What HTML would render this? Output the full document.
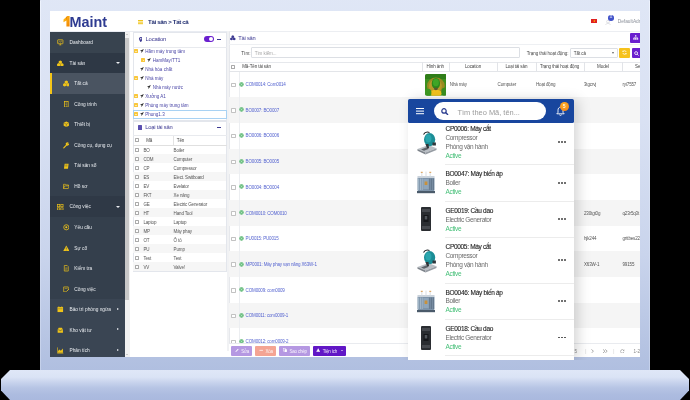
<!DOCTYPE html>
<html><head><meta charset="utf-8"><style>
*{margin:0;padding:0;box-sizing:border-box}
html,body{width:690px;height:400px;overflow:hidden;background:#000}
body{position:relative;font-family:"Liberation Sans",sans-serif;color:#333}
div,span,svg{position:absolute}
.nw{white-space:nowrap}
</style></head><body>
<div style="left:0;top:0;width:690px;height:400px;overflow:hidden;will-change:transform">
<div style="left:40px;top:-12px;width:610px;height:382px;border-radius:9px 9px 0 0;background:linear-gradient(#e0e7f6 0%,#d9e1f3 35%,#c9d4ec 70%,#b0bfe0 100%)"></div>
<div style="left:40px;top:1px;width:1.2px;height:369px;background:linear-gradient(#eef3fd,#c4d0ea)"></div>
<div style="left:648.8px;top:1px;width:1.2px;height:369px;background:linear-gradient(#eef3fd,#c4d0ea)"></div>
<div style="left:0;top:370px;width:690px;height:30px;background:linear-gradient(#dfe7f7 0%,#dae3f5 24%,#c9d4ed 40%,#b6c4e4 60%,#adbce0 80%,#aab9de 100%);clip-path:polygon(10px 0,680px 0,689px 9px,689px 20.5px,680px 30px,10px 30px,1px 20.5px,1px 9px)"></div>
<div style="left:50px;top:11px;width:590px;height:346.4px;background:#fff;overflow:hidden"><div style="left:0;top:0;width:590px;height:21px;background:#fff;border-bottom:1px solid #e9ecf2"></div><svg style="left:13px;top:5px" width="7" height="11" viewBox="0 0 7 11"><defs><linearGradient id="g1" x1="0" y1="0" x2="1" y2="1"><stop offset="0" stop-color="#ffc21a"/><stop offset="1" stop-color="#f08000"/></linearGradient></defs><polygon points="0.5,3.6 4.4,0 6.6,0 6.6,10.4 3.4,10.4 3.4,4.6 0.5,6.2" fill="url(#g1)"/><polygon points="3.4,4.6 4.4,0 3.4,1" fill="#e07000"/></svg><div class="nw" style="left:19.5px;top:3.2px;font-size:14.4px;font-weight:bold;color:#2e3b91;letter-spacing:0px">Maint</div><div style="left:88px;top:9px;width:4.5px;height:0.9px;background:#f0c419;box-shadow:0 1.6px 0 #f0c419,0 3.2px 0 #f0c419"></div><div class="nw" style="left:98px;top:7.2px;font-size:6.1px;font-weight:bold;color:#1d2a6e;letter-spacing:-0.32px">Tài sản &gt; Tất cả</div><div style="left:541px;top:8px;width:6px;height:4px;background:#e02020"></div><div style="left:543.2px;top:8.6px;font-size:3px;color:#ffd800;line-height:3px">★</div><svg style="left:555.3px;top:8.6px" width="6" height="5.5" viewBox="0 0 6 5.5"><circle cx="3" cy="1.7" r="1.4" fill="none" stroke="#d4d6da" stroke-width="0.7"/><path d="M0.6 5.3C0.9 3.8 1.9 3.3 3 3.3S5.1 3.8 5.4 5.3" fill="none" stroke="#d4d6da" stroke-width="0.7"/></svg><div style="left:558.2px;top:4.2px;width:5.6px;height:5.6px;border-radius:50%;background:#4152c9;color:#fff;font-size:3px;line-height:5.6px;text-align:center">11</div><div class="nw" style="left:567.7px;top:8.0px;font-size:4.8px;color:#8a8f99">DefaultAdmin</div><div style="left:0;top:21px;width:75px;height:324.7px;background:#343f4c"></div><div style="left:0;top:21.00px;width:75px;height:20.85px;background:#38434f"></div><div class="nw" style="left:19.5px;top:29.00px;font-size:4.8px;color:#e9ecf0">Dashboard</div><svg style="left:7.2px;top:28.20px" width="6.6" height="6.6" viewBox="0 0 10 10"><rect x="1" y="1.2" width="8" height="6" rx="0.6" fill="none" stroke="#f0c419" stroke-width="1.1"/><path d="M2.6 5.2L4.2 3.6L5.4 4.6L7.4 2.8" fill="none" stroke="#f0c419" stroke-width="0.9"/><path d="M3.5 9H6.5M5 7.2V9" stroke="#f0c419" stroke-width="1"/></svg><div style="left:0;top:41.55px;width:75px;height:20.85px;background:#2e3845"></div><div class="nw" style="left:19.5px;top:49.55px;font-size:4.8px;color:#e9ecf0">Tài sản</div><svg style="left:7.2px;top:48.75px" width="6.6" height="6.6" viewBox="0 0 10 10"><path d="M5 0.6L7.4 1.9V4.6L5 5.9L2.6 4.6V1.9Z" fill="#f0c419"/><path d="M2.5 4.6L4.9 5.9V8.6L2.5 9.9L0.1 8.6V5.9Z" fill="#f0c419"/><path d="M7.5 4.6L9.9 5.9V8.6L7.5 9.9L5.1 8.6V5.9Z" fill="#f0c419"/></svg><div style="left:66px;top:50.95px;width:0;height:0;border-left:2px solid transparent;border-right:2px solid transparent;border-top:2.4px solid #eceef2"></div><div style="left:0;top:62.10px;width:75px;height:20.85px;background:#4a5461"></div><div style="left:0;top:62.10px;width:1.6px;height:20.55px;background:#f5c518"></div><div class="nw" style="left:24.3px;top:70.10px;font-size:4.8px;color:#e9ecf0">Tất cả</div><svg style="left:12.6px;top:69.30px" width="6.6" height="6.6" viewBox="0 0 10 10"><path d="M5 0.6L7.4 1.9V4.6L5 5.9L2.6 4.6V1.9Z" fill="#f0c419"/><path d="M2.5 4.6L4.9 5.9V8.6L2.5 9.9L0.1 8.6V5.9Z" fill="#f0c419"/><path d="M7.5 4.6L9.9 5.9V8.6L7.5 9.9L5.1 8.6V5.9Z" fill="#f0c419"/></svg><div class="nw" style="left:24.3px;top:90.65px;font-size:4.8px;color:#e9ecf0">Công trình</div><svg style="left:12.6px;top:89.85px" width="6.6" height="6.6" viewBox="0 0 10 10"><rect x="2.2" y="0.8" width="5.6" height="8.4" fill="none" stroke="#f0c419" stroke-width="1.1"/><path d="M3.8 3H6.2M3.8 5H6.2M4.6 7.2H5.4V9" stroke="#f0c419" stroke-width="0.9"/></svg><div class="nw" style="left:24.3px;top:111.20px;font-size:4.8px;color:#e9ecf0">Thiết bị</div><svg style="left:12.6px;top:110.40px" width="6.6" height="6.6" viewBox="0 0 10 10"><path d="M5 0.8L9 2.8V7.2L5 9.2L1 7.2V2.8Z" fill="#f0c419"/><path d="M1 2.8L5 4.8L9 2.8M5 4.8V9.2" fill="none" stroke="#343f4c" stroke-width="0.6"/></svg><div class="nw" style="left:24.3px;top:131.75px;font-size:4.8px;color:#e9ecf0">Công cụ, dụng cụ</div><svg style="left:12.6px;top:130.95px" width="6.6" height="6.6" viewBox="0 0 10 10"><path d="M1.2 8.8L5.2 4.8" stroke="#f0c419" stroke-width="1.8" stroke-linecap="round"/><path d="M5 5A2.6 2.6 0 1 1 8.6 1.2L6.8 3L7.2 3.6L9 2A2.6 2.6 0 0 1 5 5Z" fill="#f0c419"/></svg><div class="nw" style="left:24.3px;top:152.30px;font-size:4.8px;color:#e9ecf0">Tài sản số</div><svg style="left:12.6px;top:151.50px" width="6.6" height="6.6" viewBox="0 0 10 10"><path d="M2.5 1H8.5L7.5 8.8H1.5Z" fill="#f0c419"/><path d="M3.6 3H6.8M3.4 4.6H6.6" stroke="#343f4c" stroke-width="0.6"/></svg><div class="nw" style="left:24.3px;top:172.85px;font-size:4.8px;color:#e9ecf0">Hồ sơ</div><svg style="left:12.6px;top:172.05px" width="6.6" height="6.6" viewBox="0 0 10 10"><path d="M0.8 2H3.8L4.6 3H8.4V4.4M0.8 2V8.4H8L9.4 4.4H2.4L0.8 8.4" fill="none" stroke="#f0c419" stroke-width="1"/></svg><div style="left:0;top:185.40px;width:75px;height:20.85px;background:#2f3946"></div><div class="nw" style="left:19.5px;top:193.40px;font-size:4.8px;color:#e9ecf0">Công việc</div><svg style="left:7.2px;top:192.60px" width="6.6" height="6.6" viewBox="0 0 10 10"><rect x="0.8" y="0.8" width="3.4" height="3.4" fill="none" stroke="#f0c419" stroke-width="1"/><rect x="5.8" y="0.8" width="3.4" height="3.4" fill="none" stroke="#f0c419" stroke-width="1"/><rect x="0.8" y="5.8" width="3.4" height="3.4" fill="none" stroke="#f0c419" stroke-width="1"/><rect x="5.8" y="5.8" width="3.4" height="3.4" fill="none" stroke="#f0c419" stroke-width="1"/></svg><div style="left:66px;top:194.80px;width:0;height:0;border-left:2px solid transparent;border-right:2px solid transparent;border-top:2.4px solid #eceef2"></div><div class="nw" style="left:24.3px;top:213.95px;font-size:4.8px;color:#e9ecf0">Yêu cầu</div><svg style="left:12.6px;top:213.15px" width="6.6" height="6.6" viewBox="0 0 10 10"><circle cx="5" cy="5" r="3.9" fill="none" stroke="#f0c419" stroke-width="1.2"/><circle cx="5" cy="5" r="1.6" fill="#f0c419"/></svg><div class="nw" style="left:24.3px;top:234.50px;font-size:4.8px;color:#e9ecf0">Sự cố</div><svg style="left:12.6px;top:233.70px" width="6.6" height="6.6" viewBox="0 0 10 10"><path d="M5 0.6L9.6 9H0.4Z" fill="#f0c419"/><path d="M5 3.6V6.2M5 7.1V8" stroke="#343f4c" stroke-width="0.9"/></svg><div class="nw" style="left:24.3px;top:255.05px;font-size:4.8px;color:#e9ecf0">Kiểm tra</div><svg style="left:12.6px;top:254.25px" width="6.6" height="6.6" viewBox="0 0 10 10"><path d="M2 0.8H6.4L8 2.4V9.2H2Z" fill="none" stroke="#f0c419" stroke-width="1"/><path d="M3.4 4.4H6.6M3.4 6H6.6M3.4 7.6H5.6" stroke="#f0c419" stroke-width="0.7"/></svg><div class="nw" style="left:24.3px;top:275.60px;font-size:4.8px;color:#e9ecf0">Công việc</div><svg style="left:12.6px;top:274.80px" width="6.6" height="6.6" viewBox="0 0 10 10"><path d="M1 1.4H8V5.4M1 1.4V8.8H4.6" fill="none" stroke="#f0c419" stroke-width="1"/><path d="M2.6 3.6H6.4" stroke="#f0c419" stroke-width="0.8"/><path d="M5 8.6L9 4.6" stroke="#f0c419" stroke-width="1.3"/></svg><div style="left:0;top:288.15px;width:75px;height:20.85px;background:#3a4553"></div><div class="nw" style="left:19.5px;top:296.15px;font-size:4.8px;color:#e9ecf0">Bảo trì phòng ngừa</div><svg style="left:7.2px;top:295.35px" width="6.6" height="6.6" viewBox="0 0 10 10"><rect x="0.8" y="1.6" width="8.4" height="7.6" fill="#f0c419"/><path d="M2.8 0.4V2.4M7.2 0.4V2.4" stroke="#f0c419" stroke-width="0.9"/><path d="M1.6 4.2H8.4" stroke="#343f4c" stroke-width="0.5"/></svg><div style="left:66.7px;top:296.65px;width:0;height:0;border-top:1.8px solid transparent;border-bottom:1.8px solid transparent;border-left:2.4px solid #eceef2"></div><div style="left:0;top:308.70px;width:75px;height:20.85px;background:#3a4553"></div><div class="nw" style="left:19.5px;top:316.70px;font-size:4.8px;color:#e9ecf0">Kho vật tư</div><svg style="left:7.2px;top:315.90px" width="6.6" height="6.6" viewBox="0 0 10 10"><path d="M1 4.2L2.6 1H7.4L9 4.2V8.8H1Z" fill="#f0c419"/><path d="M1.6 4.4H3.6L4.2 5.6H5.8L6.4 4.4H8.4" fill="none" stroke="#343f4c" stroke-width="0.7"/></svg><div style="left:66.7px;top:317.20px;width:0;height:0;border-top:1.8px solid transparent;border-bottom:1.8px solid transparent;border-left:2.4px solid #eceef2"></div><div style="left:0;top:329.25px;width:75px;height:16.45px;background:#3a4553"></div><div class="nw" style="left:19.5px;top:337.25px;font-size:4.8px;color:#e9ecf0">Phân tích</div><svg style="left:7.2px;top:336.45px" width="6.6" height="6.6" viewBox="0 0 10 10"><path d="M0.6 0.6V9.4H9.6" fill="none" stroke="#f0c419" stroke-width="1"/><path d="M1.6 8.6V6L3.8 3.8L5.8 5.6L9 2.4V8.6Z" fill="#f0c419"/></svg><div style="left:66.7px;top:337.75px;width:0;height:0;border-top:1.8px solid transparent;border-bottom:1.8px solid transparent;border-left:2.4px solid #eceef2"></div><div style="left:74.6px;top:21px;width:5.4px;height:326px;background:#f1f1f1"></div><div style="left:75.4px;top:26.6px;width:3.9px;height:262px;background:#c8c8c8"></div><div style="left:75.8px;top:22.6px;width:0;height:0;border-left:1.5px solid transparent;border-right:1.5px solid transparent;border-bottom:1.6px solid #a0a0a0"></div><div style="left:75.8px;top:343px;width:0;height:0;border-left:1.5px solid transparent;border-right:1.5px solid transparent;border-top:1.6px solid #a0a0a0"></div><div style="left:82.5px;top:20.5px;width:94px;height:89px;border:1px solid #e3e6ec;background:#fff"></div><div style="left:82.5px;top:35.5px;width:94px;height:1px;background:#e8eaee"></div><svg style="left:88.8px;top:25.6px" width="3.6" height="5.4" viewBox="0 0 4 6"><path d="M2 0C0.9 0 0 0.9 0 2C0 3.3 2 6 2 6S4 3.3 4 2C4 0.9 3.1 0 2 0ZM2 2.8A0.8 0.8 0 1 1 2 1.2A0.8 0.8 0 1 1 2 2.8Z" fill="#3d3a92"/></svg><div class="nw" style="left:95.5px;top:24.9px;font-size:5.9px;letter-spacing:-0.2px;color:#3d3a92">Location</div><div style="left:153.8px;top:25.4px;width:10px;height:6px;border-radius:3px;background:#6a1fcf"></div><div style="left:158.9px;top:26.3px;width:4.2px;height:4.2px;border-radius:50%;background:#fff"></div><div style="left:82.5px;top:98.8px;width:94px;height:9px;border:0.8px solid #a9d2f3"></div><div style="left:83.8px;top:38.3px;width:4.1px;height:4.1px;background:#f9c73c;border-radius:0.5px"></div><div style="left:85.2px;top:39.9px;width:1.4px;height:0.6px;background:#fde9a8"></div><svg style="left:89.7px;top:38.3px" width="3.9" height="3.9" viewBox="0 0 4 4"><path d="M4 0L0 1.7L1.6 2.3L1.3 4L2.5 2.7Z" fill="#2a2a2a"/></svg><div class="nw" style="left:95.2px;top:37.7px;font-size:4.55px;color:#4a46a6">Hầm máy trung tâm</div><div style="left:91.3px;top:47.3px;width:4.1px;height:4.1px;background:#f9c73c;border-radius:0.5px"></div><div style="left:92.7px;top:48.9px;width:1.4px;height:0.6px;background:#fde9a8"></div><svg style="left:97.2px;top:47.3px" width="3.9" height="3.9" viewBox="0 0 4 4"><path d="M4 0L0 1.7L1.6 2.3L1.3 4L2.5 2.7Z" fill="#2a2a2a"/></svg><div class="nw" style="left:102.7px;top:46.7px;font-size:4.55px;color:#4a46a6">HamMay/TT1</div><svg style="left:89.7px;top:56.3px" width="3.9" height="3.9" viewBox="0 0 4 4"><path d="M4 0L0 1.7L1.6 2.3L1.3 4L2.5 2.7Z" fill="#2a2a2a"/></svg><div class="nw" style="left:95.2px;top:55.7px;font-size:4.55px;color:#4a46a6">Nhà hóa chất</div><div style="left:83.8px;top:65.3px;width:4.1px;height:4.1px;background:#f9c73c;border-radius:0.5px"></div><div style="left:85.2px;top:66.9px;width:1.4px;height:0.6px;background:#fde9a8"></div><svg style="left:89.7px;top:65.3px" width="3.9" height="3.9" viewBox="0 0 4 4"><path d="M4 0L0 1.7L1.6 2.3L1.3 4L2.5 2.7Z" fill="#2a2a2a"/></svg><div class="nw" style="left:95.2px;top:64.7px;font-size:4.55px;color:#4a46a6">Nhà máy</div><svg style="left:97.2px;top:74.3px" width="3.9" height="3.9" viewBox="0 0 4 4"><path d="M4 0L0 1.7L1.6 2.3L1.3 4L2.5 2.7Z" fill="#2a2a2a"/></svg><div class="nw" style="left:102.7px;top:73.7px;font-size:4.55px;color:#4a46a6">Nhà máy nước</div><div style="left:83.8px;top:83.3px;width:4.1px;height:4.1px;background:#f9c73c;border-radius:0.5px"></div><div style="left:85.2px;top:84.9px;width:1.4px;height:0.6px;background:#fde9a8"></div><svg style="left:89.7px;top:83.3px" width="3.9" height="3.9" viewBox="0 0 4 4"><path d="M4 0L0 1.7L1.6 2.3L1.3 4L2.5 2.7Z" fill="#2a2a2a"/></svg><div class="nw" style="left:95.2px;top:82.7px;font-size:4.55px;color:#4a46a6">Xưởng A1</div><div style="left:83.8px;top:92.3px;width:4.1px;height:4.1px;background:#f9c73c;border-radius:0.5px"></div><div style="left:85.2px;top:93.9px;width:1.4px;height:0.6px;background:#fde9a8"></div><svg style="left:89.7px;top:92.3px" width="3.9" height="3.9" viewBox="0 0 4 4"><path d="M4 0L0 1.7L1.6 2.3L1.3 4L2.5 2.7Z" fill="#2a2a2a"/></svg><div class="nw" style="left:95.2px;top:91.7px;font-size:4.55px;color:#4a46a6">Phòng máy trung tâm</div><div style="left:83.8px;top:101.3px;width:4.1px;height:4.1px;background:#f9c73c;border-radius:0.5px"></div><div style="left:85.2px;top:102.9px;width:1.4px;height:0.6px;background:#fde9a8"></div><svg style="left:89.7px;top:101.3px" width="3.9" height="3.9" viewBox="0 0 4 4"><path d="M4 0L0 1.7L1.6 2.3L1.3 4L2.5 2.7Z" fill="#2a2a2a"/></svg><div class="nw" style="left:95.2px;top:100.7px;font-size:4.55px;color:#4a46a6">Phong1.3</div><div style="left:82.5px;top:109.5px;width:94px;height:151px;border:1px solid #e3e6ec;background:#fff"></div><div style="left:82.5px;top:123.8px;width:94px;height:1px;background:#e8eaee"></div><div style="left:88.2px;top:114.4px;width:4.2px;height:4.2px;background:#5b4fb0;border-radius:0.5px"></div><div class="nw" style="left:95.2px;top:113.0px;font-size:5.8px;letter-spacing:-0.2px;color:#3d3a92">Loại tài sản</div><div style="left:167.0px;top:27.9px;width:4.2px;height:1.2px;background:#3d3a92"></div><div style="left:167.0px;top:116.0px;width:4.2px;height:1.2px;background:#3d3a92"></div><div style="left:82.5px;top:133.6px;width:94px;height:0.8px;background:#e0e0e0"></div><div style="left:123.2px;top:124.5px;width:0.7px;height:9px;background:#e3e3e3"></div><div style="left:85.2px;top:127.1px;width:4px;height:4px;border:0.7px solid #aaa;border-radius:0.6px"></div><div class="nw" style="left:96.2px;top:127.0px;font-size:4.5px;letter-spacing:-0.15px;color:#444">Mã</div><div class="nw" style="left:126.8px;top:127.0px;font-size:4.5px;letter-spacing:-0.15px;color:#444">Tên</div><div style="left:85.2px;top:136.9px;width:4px;height:4px;border:0.7px solid #aaa;border-radius:0.6px;background:#fff"></div><div class="nw" style="left:93.4px;top:136.9px;font-size:4.5px;letter-spacing:-0.15px;color:#555">BO</div><div class="nw" style="left:123.6px;top:136.9px;font-size:4.5px;letter-spacing:-0.15px;color:#555">Boiler</div><div style="left:83.2px;top:143.4px;width:92.6px;height:9px;background:#f6f6f6"></div><div style="left:85.2px;top:145.9px;width:4px;height:4px;border:0.7px solid #aaa;border-radius:0.6px;background:#fff"></div><div class="nw" style="left:93.4px;top:145.9px;font-size:4.5px;letter-spacing:-0.15px;color:#555">COM</div><div class="nw" style="left:123.6px;top:145.9px;font-size:4.5px;letter-spacing:-0.15px;color:#555">Computer</div><div style="left:85.2px;top:154.9px;width:4px;height:4px;border:0.7px solid #aaa;border-radius:0.6px;background:#fff"></div><div class="nw" style="left:93.4px;top:154.9px;font-size:4.5px;letter-spacing:-0.15px;color:#555">CP</div><div class="nw" style="left:123.6px;top:154.9px;font-size:4.5px;letter-spacing:-0.15px;color:#555">Compressor</div><div style="left:83.2px;top:161.4px;width:92.6px;height:9px;background:#f6f6f6"></div><div style="left:85.2px;top:163.9px;width:4px;height:4px;border:0.7px solid #aaa;border-radius:0.6px;background:#fff"></div><div class="nw" style="left:93.4px;top:163.9px;font-size:4.5px;letter-spacing:-0.15px;color:#555">ES</div><div class="nw" style="left:123.6px;top:163.9px;font-size:4.5px;letter-spacing:-0.15px;color:#555">Elect. Switboard</div><div style="left:85.2px;top:172.9px;width:4px;height:4px;border:0.7px solid #aaa;border-radius:0.6px;background:#fff"></div><div class="nw" style="left:93.4px;top:172.9px;font-size:4.5px;letter-spacing:-0.15px;color:#555">EV</div><div class="nw" style="left:123.6px;top:172.9px;font-size:4.5px;letter-spacing:-0.15px;color:#555">Evelator</div><div style="left:83.2px;top:179.4px;width:92.6px;height:9px;background:#f6f6f6"></div><div style="left:85.2px;top:181.9px;width:4px;height:4px;border:0.7px solid #aaa;border-radius:0.6px;background:#fff"></div><div class="nw" style="left:93.4px;top:181.9px;font-size:4.5px;letter-spacing:-0.15px;color:#555">FKT</div><div class="nw" style="left:123.6px;top:181.9px;font-size:4.5px;letter-spacing:-0.15px;color:#555">Xe nâng</div><div style="left:85.2px;top:190.9px;width:4px;height:4px;border:0.7px solid #aaa;border-radius:0.6px;background:#fff"></div><div class="nw" style="left:93.4px;top:190.9px;font-size:4.5px;letter-spacing:-0.15px;color:#555">GE</div><div class="nw" style="left:123.6px;top:190.9px;font-size:4.5px;letter-spacing:-0.15px;color:#555">Electric Generator</div><div style="left:83.2px;top:197.4px;width:92.6px;height:9px;background:#f6f6f6"></div><div style="left:85.2px;top:199.9px;width:4px;height:4px;border:0.7px solid #aaa;border-radius:0.6px;background:#fff"></div><div class="nw" style="left:93.4px;top:199.9px;font-size:4.5px;letter-spacing:-0.15px;color:#555">HT</div><div class="nw" style="left:123.6px;top:199.9px;font-size:4.5px;letter-spacing:-0.15px;color:#555">Hand Tool</div><div style="left:85.2px;top:208.9px;width:4px;height:4px;border:0.7px solid #aaa;border-radius:0.6px;background:#fff"></div><div class="nw" style="left:93.4px;top:208.9px;font-size:4.5px;letter-spacing:-0.15px;color:#555">Laptop</div><div class="nw" style="left:123.6px;top:208.9px;font-size:4.5px;letter-spacing:-0.15px;color:#555">Laptop</div><div style="left:83.2px;top:215.4px;width:92.6px;height:9px;background:#f6f6f6"></div><div style="left:85.2px;top:217.9px;width:4px;height:4px;border:0.7px solid #aaa;border-radius:0.6px;background:#fff"></div><div class="nw" style="left:93.4px;top:217.9px;font-size:4.5px;letter-spacing:-0.15px;color:#555">MP</div><div class="nw" style="left:123.6px;top:217.9px;font-size:4.5px;letter-spacing:-0.15px;color:#555">Máy phay</div><div style="left:85.2px;top:226.9px;width:4px;height:4px;border:0.7px solid #aaa;border-radius:0.6px;background:#fff"></div><div class="nw" style="left:93.4px;top:226.9px;font-size:4.5px;letter-spacing:-0.15px;color:#555">OT</div><div class="nw" style="left:123.6px;top:226.9px;font-size:4.5px;letter-spacing:-0.15px;color:#555">Ô tô</div><div style="left:83.2px;top:233.4px;width:92.6px;height:9px;background:#f6f6f6"></div><div style="left:85.2px;top:235.9px;width:4px;height:4px;border:0.7px solid #aaa;border-radius:0.6px;background:#fff"></div><div class="nw" style="left:93.4px;top:235.9px;font-size:4.5px;letter-spacing:-0.15px;color:#555">PU</div><div class="nw" style="left:123.6px;top:235.9px;font-size:4.5px;letter-spacing:-0.15px;color:#555">Pump</div><div style="left:85.2px;top:244.9px;width:4px;height:4px;border:0.7px solid #aaa;border-radius:0.6px;background:#fff"></div><div class="nw" style="left:93.4px;top:244.9px;font-size:4.5px;letter-spacing:-0.15px;color:#555">Test</div><div class="nw" style="left:123.6px;top:244.9px;font-size:4.5px;letter-spacing:-0.15px;color:#555">Test</div><div style="left:83.2px;top:251.4px;width:92.6px;height:9px;background:#f6f6f6"></div><div style="left:85.2px;top:253.9px;width:4px;height:4px;border:0.7px solid #aaa;border-radius:0.6px;background:#fff"></div><div class="nw" style="left:93.4px;top:253.9px;font-size:4.5px;letter-spacing:-0.15px;color:#555">VV</div><div class="nw" style="left:123.6px;top:253.9px;font-size:4.5px;letter-spacing:-0.15px;color:#555">Valve!</div><div style="left:176.6px;top:20.0px;width:2px;height:320px;background:#f1f2f4"></div><div style="left:178.5px;top:20.0px;width:420px;height:320px;border-left:1px solid #e6e8ec;border-top:1px solid #eceef2"></div><svg style="left:180.3px;top:24.4px" width="5.6" height="5.4" viewBox="0 0 10 10"><path d="M5 0.6L7.4 1.9V4.6L5 5.9L2.6 4.6V1.9Z" fill="#3d3a92"/><path d="M2.5 4.6L4.9 5.9V8.6L2.5 9.9L0.1 8.6V5.9Z" fill="#3d3a92"/><path d="M7.5 4.6L9.9 5.9V8.6L7.5 9.9L5.1 8.6V5.9Z" fill="#3d3a92"/></svg><div class="nw" style="left:188.3px;top:23.8px;font-size:5.7px;letter-spacing:-0.22px;color:#3d3a92">Tài sản</div><div style="left:179.0px;top:33.3px;width:420px;height:0.8px;background:#eef0f3"></div><div style="left:580.0px;top:22.4px;width:12px;height:9.3px;background:#6a1fcf;border-radius:1px"></div><svg style="left:583.3px;top:24.3px" width="5.4" height="5" viewBox="0 0 10 9"><rect x="3.8" y="0.3" width="2.4" height="2.2" fill="#fff"/><path d="M5 2.5V4.3M1.8 5.8V4.3H8.2V5.8" fill="none" stroke="#fff" stroke-width="0.9"/><rect x="0.4" y="5.8" width="2.8" height="2.6" fill="#fff"/><rect x="3.6" y="5.8" width="2.8" height="2.6" fill="#fff"/><rect x="6.8" y="5.8" width="2.8" height="2.6" fill="#fff"/></svg><div class="nw" style="left:191.3px;top:39.6px;font-size:4.6px;color:#444">Tìm:</div><div style="left:201.2px;top:36.3px;width:269px;height:10.5px;border:0.8px solid #dcdfe4;border-radius:1px"></div><div class="nw" style="left:204.7px;top:39.7px;font-size:4.5px;letter-spacing:-0.05px;color:#a6a6a6">Tìm kiếm...</div><div class="nw" style="left:476.8px;top:39.7px;font-size:4.5px;letter-spacing:-0.05px;color:#444">Trạng thái hoạt động:</div><div style="left:520.0px;top:36.6px;width:48px;height:10.2px;border:0.8px solid #dcdfe4;border-radius:1px"></div><div class="nw" style="left:523.8px;top:39.7px;font-size:4.5px;letter-spacing:-0.05px;color:#444">Tất cả</div><div style="left:561.5px;top:41.0px;width:0;height:0;border-left:1.9px solid transparent;border-right:1.9px solid transparent;border-top:2.1px solid #666"></div><div style="left:569.4px;top:36.6px;width:10.6px;height:10.1px;background:#f6c21c;border-radius:1px"></div><svg style="left:572.3px;top:39.3px" width="5" height="5" viewBox="0 0 10 10"><path d="M8.4 4A3.6 3.6 0 0 0 2 3M1.6 6A3.6 3.6 0 0 0 8 7" fill="none" stroke="#fff" stroke-width="1.5"/><path d="M1 1V4H4Z M9 9V6H6Z" fill="#fff"/></svg><div style="left:581.6px;top:36.6px;width:10.6px;height:10.1px;background:#6a1fcf;border-radius:1px"></div><svg style="left:584.0px;top:39.5px" width="5" height="5" viewBox="0 0 10 10"><circle cx="4.2" cy="4.2" r="2.9" fill="none" stroke="#fff" stroke-width="1.6"/><path d="M6.4 6.4L9 9" stroke="#fff" stroke-width="1.8"/></svg><div style="left:179.0px;top:50.5px;width:420px;height:10px;border-top:0.8px solid #e6e8ec;border-bottom:0.8px solid #e3e5e9"></div><div style="left:181.4px;top:53.5px;width:4px;height:4px;border:0.7px solid #aaa;border-radius:0.6px"></div><div class="nw" style="left:192.2px;top:53.3px;font-size:4.5px;letter-spacing:-0.10px;color:#444">Mã-Tên tài sản</div><div style="left:371.5px;top:51.0px;width:0.7px;height:9.4px;background:#e2e4e8"></div><div style="left:399.0px;top:51.0px;width:0.7px;height:9.4px;background:#e2e4e8"></div><div style="left:447.2px;top:51.0px;width:0.7px;height:9.4px;background:#e2e4e8"></div><div style="left:485.6px;top:51.0px;width:0.7px;height:9.4px;background:#e2e4e8"></div><div style="left:533.6px;top:51.0px;width:0.7px;height:9.4px;background:#e2e4e8"></div><div style="left:572.3px;top:51.0px;width:0.7px;height:9.4px;background:#e2e4e8"></div><div class="nw" style="left:355.3px;top:53.3px;width:60px;text-align:center;font-size:4.5px;letter-spacing:-0.10px;color:#444">Hình ảnh</div><div class="nw" style="left:393.0px;top:53.3px;width:60px;text-align:center;font-size:4.5px;letter-spacing:-0.10px;color:#444">Location</div><div class="nw" style="left:436.4px;top:53.3px;width:60px;text-align:center;font-size:4.5px;letter-spacing:-0.10px;color:#444">Loại tài sản</div><div class="nw" style="left:479.6px;top:53.3px;width:60px;text-align:center;font-size:4.5px;letter-spacing:-0.10px;color:#444">Trạng thái hoạt động</div><div class="nw" style="left:523.0px;top:53.3px;width:60px;text-align:center;font-size:4.5px;letter-spacing:-0.10px;color:#444">Model</div><div class="nw" style="left:560.5px;top:53.3px;width:60px;text-align:center;font-size:4.5px;letter-spacing:-0.10px;color:#444">Serial</div><div style="left:179.0px;top:86.1px;width:420px;height:25.7px;background:#f5f5f5"></div><div style="left:179.0px;top:137.5px;width:420px;height:25.7px;background:#f5f5f5"></div><div style="left:179.0px;top:188.9px;width:420px;height:25.7px;background:#f5f5f5"></div><div style="left:179.0px;top:240.3px;width:420px;height:25.7px;background:#f5f5f5"></div><div style="left:179.0px;top:291.7px;width:420px;height:25.7px;background:#f5f5f5"></div><div style="left:189.0px;top:60.5px;width:0.7px;height:272px;background:#eceef1"></div><div style="left:181.4px;top:71.5px;width:4.6px;height:4.6px;border:0.7px solid #c2c2c2;border-radius:0.7px;background:#fff"></div><svg style="left:189.4px;top:70.6px" width="5" height="5" viewBox="0 0 10 10"><circle cx="5" cy="5" r="4.3" fill="#3aa856"/><circle cx="5" cy="5" r="2.6" fill="none" stroke="#d8f0de" stroke-width="1.1"/><circle cx="5" cy="5" r="1" fill="#d8f0de"/></svg><div class="nw" style="left:195.6px;top:71.0px;font-size:4.5px;letter-spacing:-0.15px;color:#5564d0">COM0014: Com0014</div><div class="nw" style="left:399.8px;top:71.0px;font-size:4.5px;letter-spacing:-0.15px;color:#555">Nhà máy</div><div class="nw" style="left:447.6px;top:71.0px;font-size:4.5px;letter-spacing:-0.15px;color:#555">Computer</div><div class="nw" style="left:486.0px;top:71.0px;font-size:4.5px;letter-spacing:-0.15px;color:#555">Hoạt động</div><div class="nw" style="left:534.0px;top:71.0px;font-size:4.5px;letter-spacing:-0.15px;color:#555">3tgcrvj</div><div class="nw" style="left:572.5px;top:71.0px;font-size:4.5px;letter-spacing:-0.15px;color:#555">ryi7557</div><div style="left:181.4px;top:97.2px;width:4.6px;height:4.6px;border:0.7px solid #c2c2c2;border-radius:0.7px;background:#fff"></div><svg style="left:189.4px;top:96.3px" width="5" height="5" viewBox="0 0 10 10"><circle cx="5" cy="5" r="4.3" fill="#3aa856"/><circle cx="5" cy="5" r="2.6" fill="none" stroke="#d8f0de" stroke-width="1.1"/><circle cx="5" cy="5" r="1" fill="#d8f0de"/></svg><div class="nw" style="left:195.6px;top:96.7px;font-size:4.5px;letter-spacing:-0.15px;color:#5564d0">BO0007: BO0007</div><div style="left:181.4px;top:122.9px;width:4.6px;height:4.6px;border:0.7px solid #c2c2c2;border-radius:0.7px;background:#fff"></div><svg style="left:189.4px;top:122.0px" width="5" height="5" viewBox="0 0 10 10"><circle cx="5" cy="5" r="4.3" fill="#3aa856"/><circle cx="5" cy="5" r="2.6" fill="none" stroke="#d8f0de" stroke-width="1.1"/><circle cx="5" cy="5" r="1" fill="#d8f0de"/></svg><div class="nw" style="left:195.6px;top:122.4px;font-size:4.5px;letter-spacing:-0.15px;color:#5564d0">BO0006: BO0006</div><div style="left:181.4px;top:148.6px;width:4.6px;height:4.6px;border:0.7px solid #c2c2c2;border-radius:0.7px;background:#fff"></div><svg style="left:189.4px;top:147.7px" width="5" height="5" viewBox="0 0 10 10"><circle cx="5" cy="5" r="4.3" fill="#3aa856"/><circle cx="5" cy="5" r="2.6" fill="none" stroke="#d8f0de" stroke-width="1.1"/><circle cx="5" cy="5" r="1" fill="#d8f0de"/></svg><div class="nw" style="left:195.6px;top:148.1px;font-size:4.5px;letter-spacing:-0.15px;color:#5564d0">BO0005: BO0005</div><div style="left:181.4px;top:174.3px;width:4.6px;height:4.6px;border:0.7px solid #c2c2c2;border-radius:0.7px;background:#fff"></div><svg style="left:189.4px;top:173.4px" width="5" height="5" viewBox="0 0 10 10"><circle cx="5" cy="5" r="4.3" fill="#3aa856"/><circle cx="5" cy="5" r="2.6" fill="none" stroke="#d8f0de" stroke-width="1.1"/><circle cx="5" cy="5" r="1" fill="#d8f0de"/></svg><div class="nw" style="left:195.6px;top:173.8px;font-size:4.5px;letter-spacing:-0.15px;color:#5564d0">BO0004: BO0004</div><div style="left:181.4px;top:200.0px;width:4.6px;height:4.6px;border:0.7px solid #c2c2c2;border-radius:0.7px;background:#fff"></div><svg style="left:189.4px;top:199.1px" width="5" height="5" viewBox="0 0 10 10"><circle cx="5" cy="5" r="4.3" fill="#3aa856"/><circle cx="5" cy="5" r="2.6" fill="none" stroke="#d8f0de" stroke-width="1.1"/><circle cx="5" cy="5" r="1" fill="#d8f0de"/></svg><div class="nw" style="left:195.6px;top:199.5px;font-size:4.5px;letter-spacing:-0.15px;color:#5564d0">COM0010: COM0010</div><div class="nw" style="left:534.0px;top:199.5px;font-size:4.5px;letter-spacing:-0.15px;color:#555">230tgt0g</div><div class="nw" style="left:572.5px;top:199.5px;font-size:4.5px;letter-spacing:-0.15px;color:#555">q23r5q3t</div><div style="left:181.4px;top:225.7px;width:4.6px;height:4.6px;border:0.7px solid #c2c2c2;border-radius:0.7px;background:#fff"></div><svg style="left:189.4px;top:224.8px" width="5" height="5" viewBox="0 0 10 10"><circle cx="5" cy="5" r="4.3" fill="#3aa856"/><circle cx="5" cy="5" r="2.6" fill="none" stroke="#d8f0de" stroke-width="1.1"/><circle cx="5" cy="5" r="1" fill="#d8f0de"/></svg><div class="nw" style="left:195.6px;top:225.2px;font-size:4.5px;letter-spacing:-0.15px;color:#5564d0">PU0015: PU0015</div><div class="nw" style="left:534.0px;top:225.2px;font-size:4.5px;letter-spacing:-0.15px;color:#555">hjk244</div><div class="nw" style="left:572.5px;top:225.2px;font-size:4.5px;letter-spacing:-0.15px;color:#555">grttbes22</div><div style="left:181.4px;top:251.4px;width:4.6px;height:4.6px;border:0.7px solid #c2c2c2;border-radius:0.7px;background:#fff"></div><svg style="left:189.4px;top:250.5px" width="5" height="5" viewBox="0 0 10 10"><circle cx="5" cy="5" r="4.3" fill="#3aa856"/><circle cx="5" cy="5" r="2.6" fill="none" stroke="#d8f0de" stroke-width="1.1"/><circle cx="5" cy="5" r="1" fill="#d8f0de"/></svg><div class="nw" style="left:195.6px;top:250.9px;font-size:4.5px;letter-spacing:-0.15px;color:#5564d0">MP0001: Máy phay vạn năng X63W-1</div><div class="nw" style="left:534.0px;top:250.9px;font-size:4.5px;letter-spacing:-0.15px;color:#555">X63W-1</div><div class="nw" style="left:572.5px;top:250.9px;font-size:4.5px;letter-spacing:-0.15px;color:#555">99155</div><div style="left:181.4px;top:277.1px;width:4.6px;height:4.6px;border:0.7px solid #c2c2c2;border-radius:0.7px;background:#fff"></div><svg style="left:189.4px;top:276.2px" width="5" height="5" viewBox="0 0 10 10"><circle cx="5" cy="5" r="4.3" fill="#3aa856"/><circle cx="5" cy="5" r="2.6" fill="none" stroke="#d8f0de" stroke-width="1.1"/><circle cx="5" cy="5" r="1" fill="#d8f0de"/></svg><div class="nw" style="left:195.6px;top:276.6px;font-size:4.5px;letter-spacing:-0.15px;color:#5564d0">COM0009: com0009</div><div style="left:181.4px;top:302.8px;width:4.6px;height:4.6px;border:0.7px solid #c2c2c2;border-radius:0.7px;background:#fff"></div><svg style="left:189.4px;top:301.9px" width="5" height="5" viewBox="0 0 10 10"><circle cx="5" cy="5" r="4.3" fill="#3aa856"/><circle cx="5" cy="5" r="2.6" fill="none" stroke="#d8f0de" stroke-width="1.1"/><circle cx="5" cy="5" r="1" fill="#d8f0de"/></svg><div class="nw" style="left:195.6px;top:302.3px;font-size:4.5px;letter-spacing:-0.15px;color:#5564d0">COM0011: com0009-1</div><div style="left:181.4px;top:328.5px;width:4.6px;height:4.6px;border:0.7px solid #c2c2c2;border-radius:0.7px;background:#fff"></div><svg style="left:189.4px;top:327.6px" width="5" height="5" viewBox="0 0 10 10"><circle cx="5" cy="5" r="4.3" fill="#3aa856"/><circle cx="5" cy="5" r="2.6" fill="none" stroke="#d8f0de" stroke-width="1.1"/><circle cx="5" cy="5" r="1" fill="#d8f0de"/></svg><div class="nw" style="left:195.6px;top:328.0px;font-size:4.5px;letter-spacing:-0.15px;color:#5564d0">COM0012: com0009-2</div><svg style="left:374.5px;top:63.1px" width="21.8" height="21.8" viewBox="0 0 22 22"><defs><clipPath id="tc"><rect width="22" height="22" rx="2.2"/></clipPath></defs><g clip-path="url(#tc)"><rect width="22" height="22" fill="#3d8f1f"/><rect x="0" y="0" width="22" height="5" fill="#2f7d18"/><ellipse cx="11" cy="12" rx="9" ry="8.5" fill="#9a8a22"/><ellipse cx="10.5" cy="12.5" rx="6.5" ry="7" fill="#b79a2a"/><ellipse cx="11" cy="9.5" rx="4.2" ry="5.5" fill="#2c8a1c"/><ellipse cx="11" cy="8.5" rx="3" ry="3.8" fill="#3fa526"/><ellipse cx="11" cy="19.5" rx="6" ry="3.5" fill="#f2c21e"/><ellipse cx="3" cy="19" rx="3.5" ry="4" fill="#3e9a22"/><ellipse cx="19.5" cy="18" rx="3" ry="4" fill="#3a8f20"/><ellipse cx="11" cy="15" rx="2" ry="1.5" fill="#5a5a30"/></g></svg><div style="left:179.0px;top:332.2px;width:420px;height:20px;background:#fff;border-top:0.8px solid #e9ebef"></div><div style="left:181.0px;top:334.5px;width:21.3px;height:10.5px;background:#b598e2;border-radius:1px"></div><svg style="left:184.6px;top:337.2px" width="4.4" height="4.4" viewBox="0 0 10 10"><path d="M1 9L1.4 7.2L6.8 1.8L8.2 3.2L2.8 8.6Z" fill="#fff"/></svg><div class="nw" style="left:191.2px;top:337.5px;font-size:4.5px;letter-spacing:-0.2px;color:rgba(255,255,255,.88)">Sửa</div><div style="left:205.3px;top:334.5px;width:21.2px;height:10.5px;background:#f4a493;border-radius:1px"></div><svg style="left:208.9px;top:337.2px" width="4.4" height="4.4" viewBox="0 0 10 10"><rect x="1" y="4.3" width="8" height="1.6" fill="#fff"/></svg><div class="nw" style="left:215.5px;top:337.5px;font-size:4.5px;letter-spacing:-0.2px;color:rgba(255,255,255,.88)">Xóa</div><div style="left:229.3px;top:334.5px;width:30.5px;height:10.5px;background:#b598e2;border-radius:1px"></div><svg style="left:232.9px;top:337.2px" width="4.4" height="4.4" viewBox="0 0 10 10"><rect x="1.2" y="1" width="5" height="6" fill="none" stroke="#fff" stroke-width="1"/><rect x="3.8" y="3" width="5" height="6" fill="#fff"/></svg><div class="nw" style="left:239.5px;top:337.5px;font-size:4.5px;letter-spacing:-0.2px;color:rgba(255,255,255,.88)">Sao chép</div><div style="left:262.6px;top:334.5px;width:33.6px;height:10.5px;background:#6117c6;border-radius:1px"></div><svg style="left:266.2px;top:337.2px" width="4.4" height="4.4" viewBox="0 0 10 10"><path d="M1 6.5H9V8.8H1Z M2.5 6.5L3.5 3H6.5L7.5 6.5Z M4.2 1H5.8V3H4.2Z" fill="#fff"/></svg><div class="nw" style="left:272.8px;top:337.5px;font-size:4.5px;letter-spacing:-0.2px;color:rgba(255,255,255,.88)">Tiện ích</div><div style="left:290.6px;top:339.2px;width:0;height:0;border-left:1.7px solid transparent;border-right:1.7px solid transparent;border-top:1.9px solid #fff"></div><div class="nw" style="left:512.0px;top:337.8px;font-size:4.6px;color:#888">1 của 5</div><div class="nw" style="left:535.3px;top:337.6px;font-size:4.6px;color:#ccc">|</div><div class="nw" style="left:563.3px;top:337.6px;font-size:4.6px;color:#ccc">|</div><div class="nw" style="left:583.5px;top:337.8px;font-size:4.6px;color:#888">1-2</div><svg style="left:541.0px;top:338.0px" width="18" height="4.4" viewBox="0 0 18 4.4"><path d="M0.4 0.4L2.4 2.2L0.4 4M12 0.4L14 2.2L12 4M14.2 0.4L16.2 2.2L14.2 4" fill="none" stroke="#8a8a8a" stroke-width="0.7"/></svg><svg style="left:570.2px;top:337.6px" width="4.6" height="4.6" viewBox="0 0 10 10"><path d="M8.2 3.4A3.8 3.8 0 1 0 8.6 6" fill="none" stroke="#8a8a8a" stroke-width="1.3"/><path d="M6.4 3.6H9.2V0.8Z" fill="#8a8a8a"/></svg></div>
<div style="left:50px;top:11px;width:590px;height:349px;overflow:hidden"><div style="left:358.1px;top:87.8px;width:165.7px;height:261px;background:#fff;box-shadow:4px 1px 12px rgba(0,0,0,.17);overflow:hidden"><div style="left:0;top:0;width:165.7px;height:23.8px;background:#18469e;border-radius:1.6px"></div><div style="left:8.1px;top:9.0px;width:8px;height:1.2px;background:#fff;box-shadow:0 2.6px 0 #fff,0 5.2px 0 #fff"></div><div style="left:25.5px;top:3.4px;width:112.6px;height:18.2px;border-radius:9.1px;background:#fff"></div><svg style="left:32.6px;top:9.0px" width="8" height="7" viewBox="0 0 8 7"><circle cx="3" cy="2.9" r="2.2" stroke="#2b3c8f" stroke-width="1.2" fill="none"/><path d="M4.6 4.5L6.6 6.5" stroke="#2b3c8f" stroke-width="1.4" stroke-linecap="round"/></svg><div class="nw" style="left:49.4px;top:9.1px;font-size:7.45px;color:#9b9b9b">Tìm theo Mã, tên...</div><svg style="left:148px;top:7px" width="9" height="10" viewBox="0 0 9 10"><path d="M4.5 1.2C2.8 1.2 2 2.6 2 4.2V6.4L0.8 7.8H8.2L7 6.4V4.2C7 2.6 6.2 1.2 4.5 1.2Z" fill="none" stroke="#fff" stroke-width="0.9"/><path d="M3.6 8.6A0.9 0.9 0 0 0 5.4 8.6" stroke="#fff" stroke-width="0.8" fill="none"/></svg><div style="left:151.7px;top:3.6px;width:8.8px;height:8.8px;border-radius:50%;background:radial-gradient(circle at 45% 35%,#ffb52e,#f07a10);color:#fff;font-size:5px;line-height:8.8px;text-align:center">5</div><div class="nw" style="left:37.4px;top:26.30px;font-size:6.5px;color:#262626;letter-spacing:-0.3px;-webkit-text-stroke:0.12px #262626">CP0006: Máy cắt</div><div class="nw" style="left:37.4px;top:35.10px;font-size:6.5px;color:#6c6c6c;letter-spacing:-0.36px">Compressor</div><div class="nw" style="left:37.4px;top:44.00px;font-size:6.5px;color:#6c6c6c;letter-spacing:-0.36px">Phòng vận hành</div><div class="nw" style="left:37.4px;top:52.90px;font-size:6.5px;color:#43bf76;letter-spacing:-0.3px">Active</div><div style="left:37.4px;top:65.60px;width:129px;height:0.8px;background:#ececec"></div><div style="left:150.0px;top:42.30px;width:1.9px;height:1.9px;border-radius:50%;background:#444"></div><div style="left:153.0px;top:42.30px;width:1.9px;height:1.9px;border-radius:50%;background:#444"></div><div style="left:156.0px;top:42.30px;width:1.9px;height:1.9px;border-radius:50%;background:#444"></div><svg style="left:8.5px;top:30.80px" width="20" height="25" viewBox="0 0 20 25"><path d="M0.5 19L11.5 15L19.5 18.2L8.5 22.6Z" fill="#b9bec4"/><path d="M0.5 19L8.5 22.6V24.4L0.5 20.8Z" fill="#7e848b"/><path d="M8.5 22.6L19.5 18.2V20L8.5 24.4Z" fill="#969ca3"/><path d="M4 19.5L9 17.6L12 18.8L7 20.8Z" fill="#5d6369"/><ellipse cx="12.6" cy="9.6" rx="5.6" ry="6.6" fill="#1b8d96"/><ellipse cx="11.4" cy="8.4" rx="3" ry="4" fill="#2aa6ae"/><path d="M8.5 14L10 18.5L12 18L11.5 14Z" fill="#2f3438"/><path d="M6.5 4.6C7.5 2.6 10 1.6 12.5 2.4" fill="none" stroke="#1f2326" stroke-width="1.1"/><rect x="15.5" y="12.5" width="3.4" height="3" fill="#30363b"/></svg><div class="nw" style="left:37.4px;top:71.70px;font-size:6.5px;color:#262626;letter-spacing:-0.3px;-webkit-text-stroke:0.12px #262626">BO0047: Máy biến áp</div><div class="nw" style="left:37.4px;top:80.50px;font-size:6.5px;color:#6c6c6c;letter-spacing:-0.36px">Boiler</div><div class="nw" style="left:37.4px;top:89.40px;font-size:6.5px;color:#43bf76;letter-spacing:-0.3px">Active</div><div style="left:37.4px;top:102.00px;width:129px;height:0.8px;background:#ececec"></div><div style="left:150.0px;top:83.20px;width:1.9px;height:1.9px;border-radius:50%;background:#444"></div><div style="left:153.0px;top:83.20px;width:1.9px;height:1.9px;border-radius:50%;background:#444"></div><div style="left:156.0px;top:83.20px;width:1.9px;height:1.9px;border-radius:50%;background:#444"></div><svg style="left:8px;top:72.70px" width="20" height="23" viewBox="0 0 20 23"><rect x="1.5" y="6.5" width="17" height="13.5" rx="1" fill="#7d93a9"/><path d="M2.6 7.5V19M4.4 7.5V19M6.2 7.5V19" stroke="#a9bccd" stroke-width="0.9"/><path d="M13.8 7.5V19M15.6 7.5V19M17.4 7.5V19" stroke="#5e7287" stroke-width="0.9"/><rect x="7.3" y="8" width="5.4" height="10" fill="#8fa5ba"/><rect x="1.5" y="5" width="17" height="2" fill="#c9d2db"/><rect x="5" y="1.2" width="1.5" height="4" fill="#e7e9ec"/><rect x="9.25" y="0.6" width="1.5" height="4.6" fill="#e7e9ec"/><rect x="13.5" y="1.2" width="1.5" height="4" fill="#e7e9ec"/><rect x="4.8" y="0.8" width="1.9" height="1" fill="#d99a4a"/><rect x="13.3" y="0.8" width="1.9" height="1" fill="#d99a4a"/><rect x="1" y="20" width="18" height="2.2" fill="#4a5a6a"/><rect x="8.6" y="10.5" width="2.8" height="3.5" fill="#c8913c"/></svg><div class="nw" style="left:37.4px;top:108.10px;font-size:6.5px;color:#262626;letter-spacing:-0.3px;-webkit-text-stroke:0.12px #262626">GE0019: Cầu dao</div><div class="nw" style="left:37.4px;top:116.90px;font-size:6.5px;color:#6c6c6c;letter-spacing:-0.36px">Electric Generator</div><div class="nw" style="left:37.4px;top:125.80px;font-size:6.5px;color:#43bf76;letter-spacing:-0.3px">Active</div><div style="left:37.4px;top:138.40px;width:129px;height:0.8px;background:#ececec"></div><div style="left:150.0px;top:119.60px;width:1.9px;height:1.9px;border-radius:50%;background:#444"></div><div style="left:153.0px;top:119.60px;width:1.9px;height:1.9px;border-radius:50%;background:#444"></div><div style="left:156.0px;top:119.60px;width:1.9px;height:1.9px;border-radius:50%;background:#444"></div><svg style="left:12px;top:108.60px" width="12" height="24" viewBox="0 0 12 24"><rect x="1" y="0" width="10" height="24" rx="1" fill="#2a2d31"/><rect x="2" y="2" width="8" height="3" fill="#46494e"/><rect x="3.5" y="8" width="5" height="7" fill="#15171a"/><rect x="4.7" y="9" width="2.6" height="3.5" fill="#50545a"/><rect x="2" y="19" width="8" height="3" fill="#46494e"/></svg><div class="nw" style="left:37.4px;top:144.50px;font-size:6.5px;color:#262626;letter-spacing:-0.3px;-webkit-text-stroke:0.12px #262626">CP0005: Máy cắt</div><div class="nw" style="left:37.4px;top:153.30px;font-size:6.5px;color:#6c6c6c;letter-spacing:-0.36px">Compressor</div><div class="nw" style="left:37.4px;top:162.20px;font-size:6.5px;color:#6c6c6c;letter-spacing:-0.36px">Phòng vận hành</div><div class="nw" style="left:37.4px;top:171.10px;font-size:6.5px;color:#43bf76;letter-spacing:-0.3px">Active</div><div style="left:37.4px;top:183.80px;width:129px;height:0.8px;background:#ececec"></div><div style="left:150.0px;top:160.50px;width:1.9px;height:1.9px;border-radius:50%;background:#444"></div><div style="left:153.0px;top:160.50px;width:1.9px;height:1.9px;border-radius:50%;background:#444"></div><div style="left:156.0px;top:160.50px;width:1.9px;height:1.9px;border-radius:50%;background:#444"></div><svg style="left:8.5px;top:149.00px" width="20" height="25" viewBox="0 0 20 25"><path d="M0.5 19L11.5 15L19.5 18.2L8.5 22.6Z" fill="#b9bec4"/><path d="M0.5 19L8.5 22.6V24.4L0.5 20.8Z" fill="#7e848b"/><path d="M8.5 22.6L19.5 18.2V20L8.5 24.4Z" fill="#969ca3"/><path d="M4 19.5L9 17.6L12 18.8L7 20.8Z" fill="#5d6369"/><ellipse cx="12.6" cy="9.6" rx="5.6" ry="6.6" fill="#1b8d96"/><ellipse cx="11.4" cy="8.4" rx="3" ry="4" fill="#2aa6ae"/><path d="M8.5 14L10 18.5L12 18L11.5 14Z" fill="#2f3438"/><path d="M6.5 4.6C7.5 2.6 10 1.6 12.5 2.4" fill="none" stroke="#1f2326" stroke-width="1.1"/><rect x="15.5" y="12.5" width="3.4" height="3" fill="#30363b"/></svg><div class="nw" style="left:37.4px;top:189.90px;font-size:6.5px;color:#262626;letter-spacing:-0.3px;-webkit-text-stroke:0.12px #262626">BO0046: Máy biến áp</div><div class="nw" style="left:37.4px;top:198.70px;font-size:6.5px;color:#6c6c6c;letter-spacing:-0.36px">Boiler</div><div class="nw" style="left:37.4px;top:207.60px;font-size:6.5px;color:#43bf76;letter-spacing:-0.3px">Active</div><div style="left:37.4px;top:220.20px;width:129px;height:0.8px;background:#ececec"></div><div style="left:150.0px;top:201.40px;width:1.9px;height:1.9px;border-radius:50%;background:#444"></div><div style="left:153.0px;top:201.40px;width:1.9px;height:1.9px;border-radius:50%;background:#444"></div><div style="left:156.0px;top:201.40px;width:1.9px;height:1.9px;border-radius:50%;background:#444"></div><svg style="left:8px;top:190.90px" width="20" height="23" viewBox="0 0 20 23"><rect x="1.5" y="6.5" width="17" height="13.5" rx="1" fill="#7d93a9"/><path d="M2.6 7.5V19M4.4 7.5V19M6.2 7.5V19" stroke="#a9bccd" stroke-width="0.9"/><path d="M13.8 7.5V19M15.6 7.5V19M17.4 7.5V19" stroke="#5e7287" stroke-width="0.9"/><rect x="7.3" y="8" width="5.4" height="10" fill="#8fa5ba"/><rect x="1.5" y="5" width="17" height="2" fill="#c9d2db"/><rect x="5" y="1.2" width="1.5" height="4" fill="#e7e9ec"/><rect x="9.25" y="0.6" width="1.5" height="4.6" fill="#e7e9ec"/><rect x="13.5" y="1.2" width="1.5" height="4" fill="#e7e9ec"/><rect x="4.8" y="0.8" width="1.9" height="1" fill="#d99a4a"/><rect x="13.3" y="0.8" width="1.9" height="1" fill="#d99a4a"/><rect x="1" y="20" width="18" height="2.2" fill="#4a5a6a"/><rect x="8.6" y="10.5" width="2.8" height="3.5" fill="#c8913c"/></svg><div class="nw" style="left:37.4px;top:226.30px;font-size:6.5px;color:#262626;letter-spacing:-0.3px;-webkit-text-stroke:0.12px #262626">GE0018: Cầu dao</div><div class="nw" style="left:37.4px;top:235.10px;font-size:6.5px;color:#6c6c6c;letter-spacing:-0.36px">Electric Generator</div><div class="nw" style="left:37.4px;top:244.00px;font-size:6.5px;color:#43bf76;letter-spacing:-0.3px">Active</div><div style="left:37.4px;top:256.60px;width:129px;height:0.8px;background:#ececec"></div><div style="left:150.0px;top:237.80px;width:1.9px;height:1.9px;border-radius:50%;background:#444"></div><div style="left:153.0px;top:237.80px;width:1.9px;height:1.9px;border-radius:50%;background:#444"></div><div style="left:156.0px;top:237.80px;width:1.9px;height:1.9px;border-radius:50%;background:#444"></div><svg style="left:12px;top:226.80px" width="12" height="24" viewBox="0 0 12 24"><rect x="1" y="0" width="10" height="24" rx="1" fill="#2a2d31"/><rect x="2" y="2" width="8" height="3" fill="#46494e"/><rect x="3.5" y="8" width="5" height="7" fill="#15171a"/><rect x="4.7" y="9" width="2.6" height="3.5" fill="#50545a"/><rect x="2" y="19" width="8" height="3" fill="#46494e"/></svg></div></div>
</div>
</body></html>
